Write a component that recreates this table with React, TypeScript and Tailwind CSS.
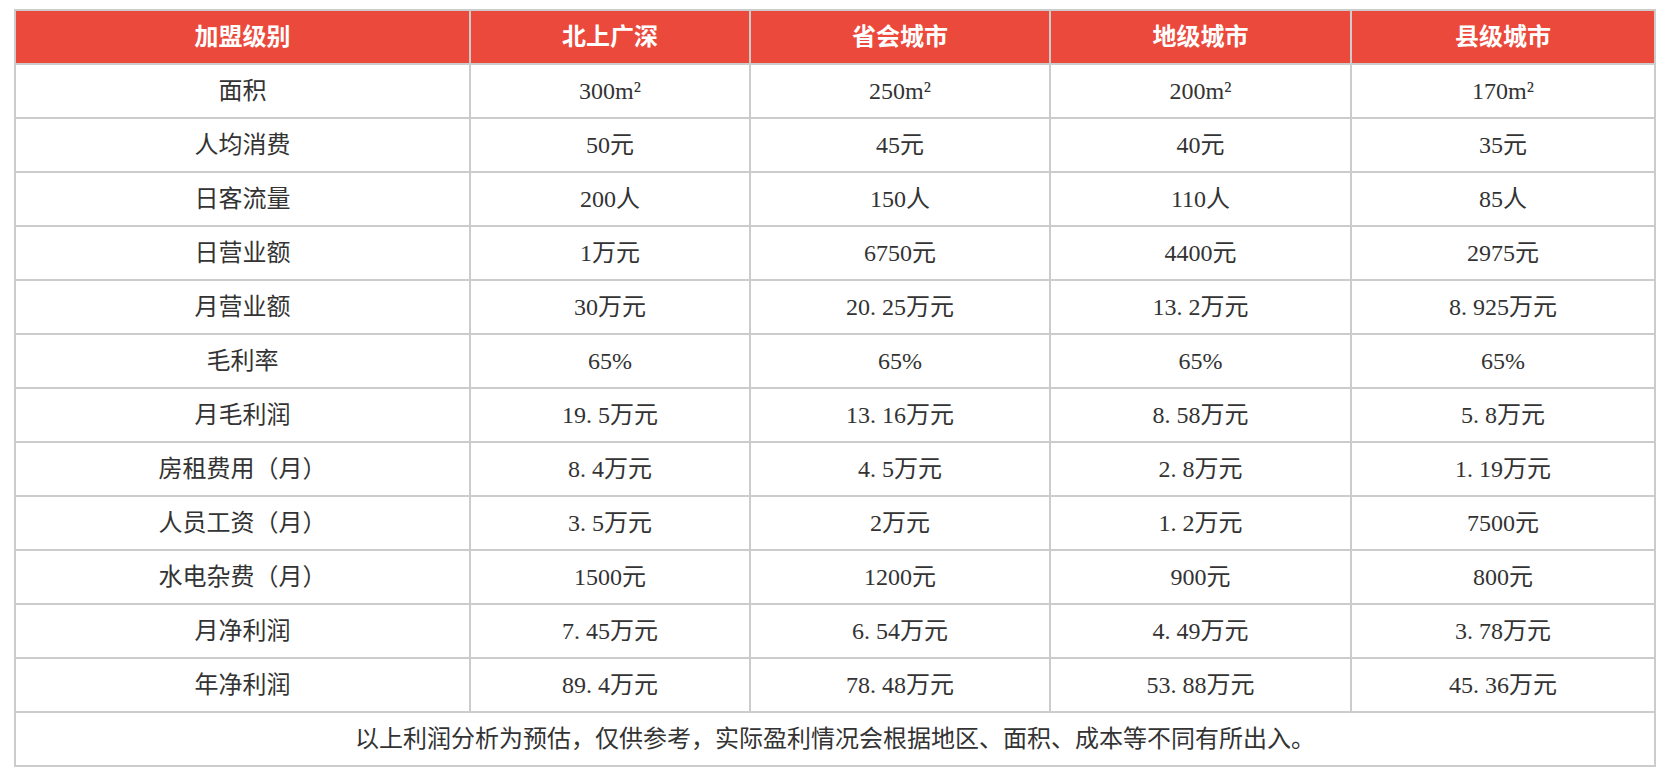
import React from "react";

const headers = ["加盟级别", "北上广深", "省会城市", "地级城市", "县级城市"];

const rows: string[][] = [
  ["面积", "300m²", "250m²", "200m²", "170m²"],
  ["人均消费", "50元", "45元", "40元", "35元"],
  ["日客流量", "200人", "150人", "110人", "85人"],
  ["日营业额", "1万元", "6750元", "4400元", "2975元"],
  ["月营业额", "30万元", "20.25万元", "13.2万元", "8.925万元"],
  ["毛利率", "65%", "65%", "65%", "65%"],
  ["月毛利润", "19.5万元", "13.16万元", "8.58万元", "5.8万元"],
  ["房租费用（月）", "8.4万元", "4.5万元", "2.8万元", "1.19万元"],
  ["人员工资（月）", "3.5万元", "2万元", "1.2万元", "7500元"],
  ["水电杂费（月）", "1500元", "1200元", "900元", "800元"],
  ["月净利润", "7.45万元", "6.54万元", "4.49万元", "3.78万元"],
  ["年净利润", "89.4万元", "78.48万元", "53.88万元", "45.36万元"],
];

function Cell({ text }: { text: string }) {
  const parts = text.split(".");
  return (
    <>
      {parts.map((p, i) => (
        <React.Fragment key={i}>
          {i > 0 && <span className="inline-block w-[12px] text-left">.</span>}
          {p}
        </React.Fragment>
      ))}
    </>
  );
}

export default function App() {
  return (
    <div
      className="w-[1671px] h-[778px] bg-white pl-[14px] pt-[9px]"
      style={{ fontFamily: '"Liberation Serif", "Noto Sans CJK SC", serif' }}
    >
      <table className="table-fixed border-collapse w-[1640px] border-2 border-[#cccccc] text-[24px] text-[#333333]">
        <colgroup>
          <col className="w-[455px]" />
          <col className="w-[280px]" />
          <col className="w-[300px]" />
          <col className="w-[301px]" />
          <col className="w-[304px]" />
        </colgroup>
        <thead>
          <tr className="bg-[#ec493d]">
            {headers.map((h) => (
              <th
                key={h}
                className="h-[54px] border-2 border-[#cccccc] text-white font-bold text-center p-0 leading-none"
              >
                {h}
              </th>
            ))}
          </tr>
        </thead>
        <tbody>
          {rows.map((r) => (
            <tr key={r[0]}>
              {r.map((c, i) => (
                <td
                  key={i}
                  className="h-[54px] border-2 border-[#cccccc] text-center p-0 leading-none"
                >
                  <Cell text={c} />
                </td>
              ))}
            </tr>
          ))}
          <tr>
            <td
              colSpan={5}
              className="h-[54px] border-2 border-[#cccccc] text-center p-0 leading-none"
            >
              以上利润分析为预估，仅供参考，实际盈利情况会根据地区、面积、成本等不同有所出入。
            </td>
          </tr>
        </tbody>
      </table>
    </div>
  );
}
